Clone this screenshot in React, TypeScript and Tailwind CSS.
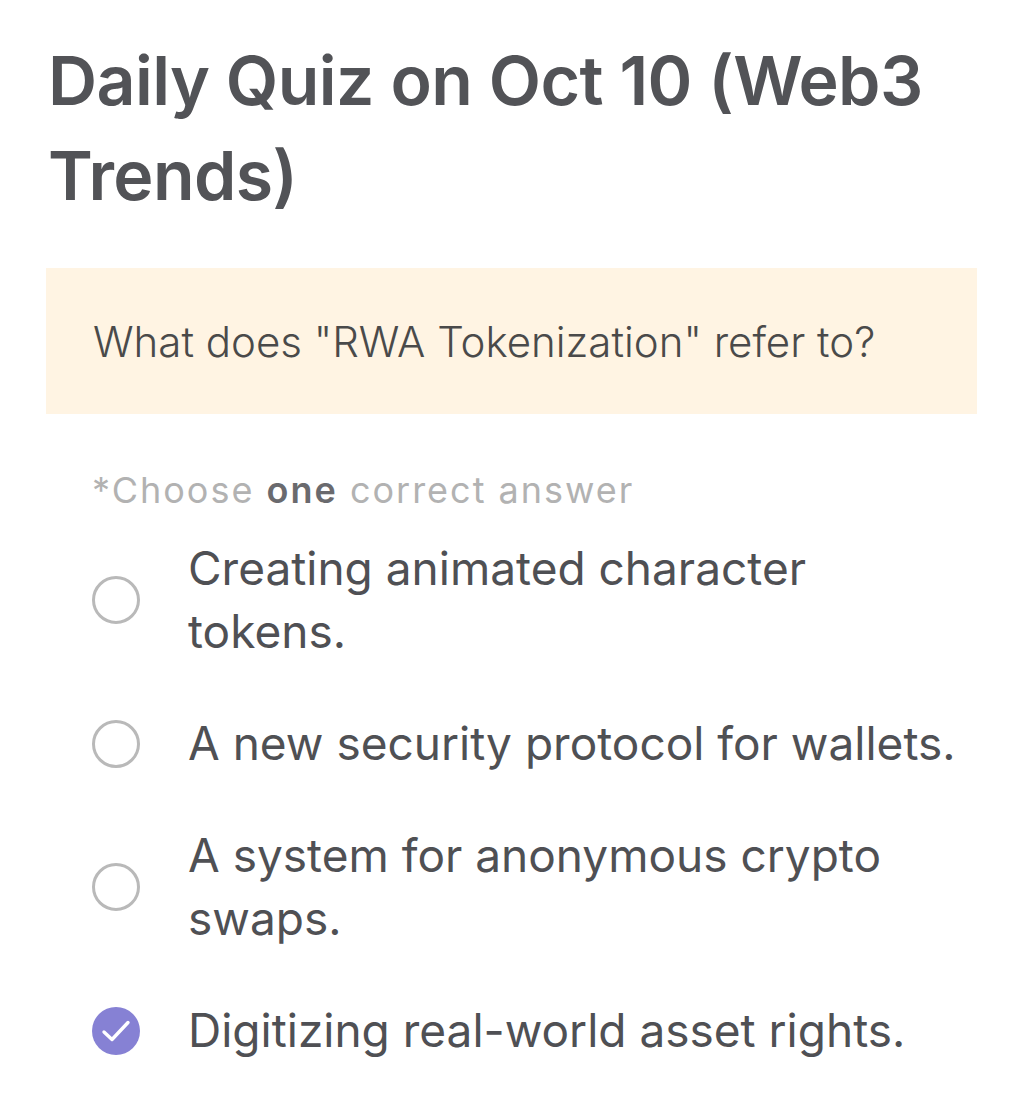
import React, { useState } from 'react';

const options = [
  'Creating animated character tokens.',
  'A new security protocol for wallets.',
  'A system for anonymous crypto swaps.',
  'Digitizing real-world asset rights.',
];

export default function App() {
  const [selected, setSelected] = useState(3);

  return (
    <div className="min-h-[1108px] bg-white px-[46px] pt-[33px] font-['Inter',sans-serif] text-[#4f5054]">
      <h1 className="pl-[2px] text-[68px] font-semibold leading-[95px] tracking-[-0.6px] text-[#525357]">
        Daily Quiz on Oct 10 (Web3 Trends)
      </h1>

      <div className="mt-[45px] flex h-[146px] w-[931px] items-center bg-[#fff4e3] px-[47px]">
        <p className="text-[42px] font-light text-[#4a4a4a]">What does "RWA Tokenization" refer to?</p>
      </div>

      <p className="mt-[51px] pl-[46px] text-[36px] leading-[50px] tracking-[2px] text-[#b2b2b2]">
        *Choose <span className="font-semibold text-[#6a6a6e]">one</span> correct answer
      </p>

      <div className="mt-[22px] flex flex-col gap-[49px] pl-[46px]">
        {options.map((opt, i) => (
          <button
            key={i}
            onClick={() => setSelected(i)}
            className="flex items-center gap-[48px] text-left"
          >
            {selected === i ? (
              <span className="flex h-[48px] w-[48px] shrink-0 items-center justify-center rounded-full bg-[#8681d4]">
                <svg width="30" height="24" viewBox="0 0 30 24" fill="none">
                  <path d="M3 13l8 7.5L27 3.5" stroke="white" strokeWidth="3.4" strokeLinecap="round" strokeLinejoin="round" />
                </svg>
              </span>
            ) : (
              <span className="h-[48px] w-[48px] shrink-0 rounded-full border-[3px] border-[#b9b9b9]" />
            )}
            <span className="w-[780px] text-[46px] leading-[63px] text-[#4f5054]">{opt}</span>
          </button>
        ))}
      </div>
    </div>
  );
}
